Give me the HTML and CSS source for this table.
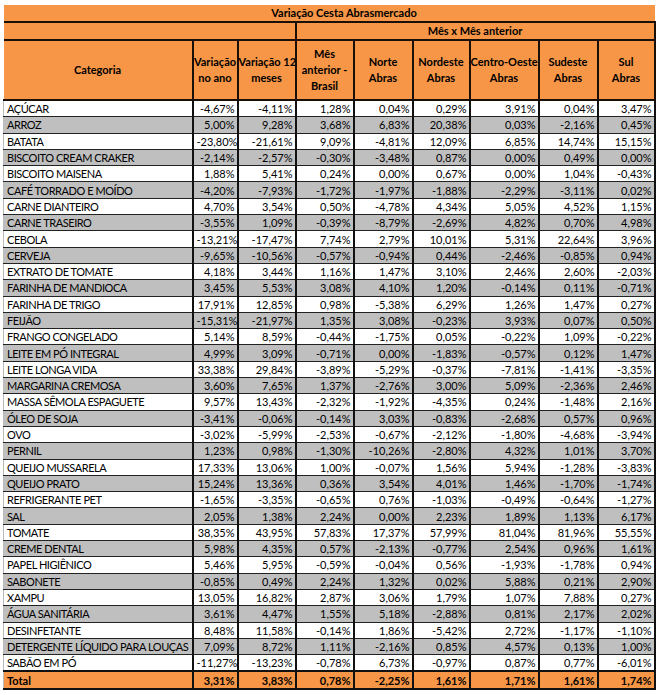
FILE: index.html
```html
<!DOCTYPE html>
<html lang="pt-BR">
<head>
<meta charset="utf-8">
<title>Variação Cesta Abrasmercado</title>
<link rel="stylesheet" href="styles.css">
</head>
<body>
<div class="wrap">
<table class="grid">
<colgroup>
<col class="c-cat"><col class="c-ano"><col class="c-12"><col class="c-br"><col class="c-no"><col class="c-ne"><col class="c-co"><col class="c-se"><col class="c-sul">
</colgroup>
<thead>
<tr class="h-title"><th colspan="9">Variação Cesta Abrasmercado</th></tr>
<tr class="h-group"><th colspan="3" class="blank"></th><th colspan="6" class="grp">Mês x Mês anterior</th></tr>
<tr class="h-cols">
<th>Categoria</th><th>Variação<br>no ano</th><th>Variação 12<br>meses</th><th>Mês<br>anterior -<br>Brasil</th><th>Norte<br>Abras</th><th>Nordeste<br>Abras</th><th>Centro-Oeste<br>Abras</th><th>Sudeste<br>Abras</th><th>Sul<br>Abras</th>
</tr>
</thead>
<tbody>
<tr><td>AÇÚCAR</td><td>-4,67%</td><td>-4,11%</td><td>1,28%</td><td>0,04%</td><td>0,29%</td><td>3,91%</td><td>0,04%</td><td>3,47%</td></tr>
<tr><td>ARROZ</td><td>5,00%</td><td>9,28%</td><td>3,68%</td><td>6,83%</td><td>20,38%</td><td>0,03%</td><td>-2,16%</td><td>0,45%</td></tr>
<tr><td>BATATA</td><td>-23,80%</td><td>-21,61%</td><td>9,09%</td><td>-4,81%</td><td>12,09%</td><td>6,85%</td><td>14,74%</td><td>15,15%</td></tr>
<tr><td>BISCOITO CREAM CRAKER</td><td>-2,14%</td><td>-2,57%</td><td>-0,30%</td><td>-3,48%</td><td>0,87%</td><td>0,00%</td><td>0,49%</td><td>0,00%</td></tr>
<tr><td>BISCOITO MAISENA</td><td>1,88%</td><td>5,41%</td><td>0,24%</td><td>0,00%</td><td>0,67%</td><td>0,00%</td><td>1,04%</td><td>-0,43%</td></tr>
<tr><td>CAFÉ TORRADO E MOÍDO</td><td>-4,20%</td><td>-7,93%</td><td>-1,72%</td><td>-1,97%</td><td>-1,88%</td><td>-2,29%</td><td>-3,11%</td><td>0,02%</td></tr>
<tr><td>CARNE DIANTEIRO</td><td>4,70%</td><td>3,54%</td><td>0,50%</td><td>-4,78%</td><td>4,34%</td><td>5,05%</td><td>4,52%</td><td>1,15%</td></tr>
<tr><td>CARNE TRASEIRO</td><td>-3,55%</td><td>1,09%</td><td>-0,39%</td><td>-8,79%</td><td>-2,69%</td><td>4,82%</td><td>0,70%</td><td>4,98%</td></tr>
<tr><td>CEBOLA</td><td>-13,21%</td><td>-17,47%</td><td>7,74%</td><td>2,79%</td><td>10,01%</td><td>5,31%</td><td>22,64%</td><td>3,96%</td></tr>
<tr><td>CERVEJA</td><td>-9,65%</td><td>-10,56%</td><td>-0,57%</td><td>-0,94%</td><td>0,44%</td><td>-2,46%</td><td>-0,85%</td><td>0,94%</td></tr>
<tr><td>EXTRATO DE TOMATE</td><td>4,18%</td><td>3,44%</td><td>1,16%</td><td>1,47%</td><td>3,10%</td><td>2,46%</td><td>2,60%</td><td>-2,03%</td></tr>
<tr><td>FARINHA DE MANDIOCA</td><td>3,45%</td><td>5,53%</td><td>3,08%</td><td>4,10%</td><td>1,20%</td><td>-0,14%</td><td>0,11%</td><td>-0,71%</td></tr>
<tr><td>FARINHA DE TRIGO</td><td>17,91%</td><td>12,85%</td><td>0,98%</td><td>-5,38%</td><td>6,29%</td><td>1,26%</td><td>1,47%</td><td>0,27%</td></tr>
<tr><td>FEIJÃO</td><td>-15,31%</td><td>-21,97%</td><td>1,35%</td><td>3,08%</td><td>-0,23%</td><td>3,93%</td><td>0,07%</td><td>0,50%</td></tr>
<tr><td>FRANGO CONGELADO</td><td>5,14%</td><td>8,59%</td><td>-0,44%</td><td>-1,75%</td><td>0,05%</td><td>-0,22%</td><td>1,09%</td><td>-0,22%</td></tr>
<tr><td>LEITE EM PÓ INTEGRAL</td><td>4,99%</td><td>3,09%</td><td>-0,71%</td><td>0,00%</td><td>-1,83%</td><td>-0,57%</td><td>0,12%</td><td>1,47%</td></tr>
<tr><td>LEITE LONGA VIDA</td><td>33,38%</td><td>29,84%</td><td>-3,89%</td><td>-5,29%</td><td>-0,37%</td><td>-7,81%</td><td>-1,41%</td><td>-3,35%</td></tr>
<tr><td>MARGARINA CREMOSA</td><td>3,60%</td><td>7,65%</td><td>1,37%</td><td>-2,76%</td><td>3,00%</td><td>5,09%</td><td>-2,36%</td><td>2,46%</td></tr>
<tr><td>MASSA SÊMOLA ESPAGUETE</td><td>9,57%</td><td>13,43%</td><td>-2,32%</td><td>-1,92%</td><td>-4,35%</td><td>0,24%</td><td>-1,48%</td><td>2,16%</td></tr>
<tr><td>ÓLEO DE SOJA</td><td>-3,41%</td><td>-0,06%</td><td>-0,14%</td><td>3,03%</td><td>-0,83%</td><td>-2,68%</td><td>0,57%</td><td>0,96%</td></tr>
<tr><td>OVO</td><td>-3,02%</td><td>-5,99%</td><td>-2,53%</td><td>-0,67%</td><td>-2,12%</td><td>-1,80%</td><td>-4,68%</td><td>-3,94%</td></tr>
<tr><td>PERNIL</td><td>1,23%</td><td>0,98%</td><td>-1,30%</td><td>-10,26%</td><td>-2,80%</td><td>4,32%</td><td>1,01%</td><td>3,70%</td></tr>
<tr><td>QUEIJO MUSSARELA</td><td>17,33%</td><td>13,06%</td><td>1,00%</td><td>-0,07%</td><td>1,56%</td><td>5,94%</td><td>-1,28%</td><td>-3,83%</td></tr>
<tr><td>QUEIJO PRATO</td><td>15,24%</td><td>13,36%</td><td>0,36%</td><td>3,54%</td><td>4,01%</td><td>1,46%</td><td>-1,70%</td><td>-1,74%</td></tr>
<tr><td>REFRIGERANTE PET</td><td>-1,65%</td><td>-3,35%</td><td>-0,65%</td><td>0,76%</td><td>-1,03%</td><td>-0,49%</td><td>-0,64%</td><td>-1,27%</td></tr>
<tr><td>SAL</td><td>2,05%</td><td>1,38%</td><td>2,24%</td><td>0,00%</td><td>2,23%</td><td>1,89%</td><td>1,13%</td><td>6,17%</td></tr>
<tr><td>TOMATE</td><td>38,35%</td><td>43,95%</td><td>57,83%</td><td>17,37%</td><td>57,99%</td><td>81,04%</td><td>81,96%</td><td>55,55%</td></tr>
<tr><td>CREME DENTAL</td><td>5,98%</td><td>4,35%</td><td>0,57%</td><td>-2,13%</td><td>-0,77%</td><td>2,54%</td><td>0,96%</td><td>1,61%</td></tr>
<tr><td>PAPEL HIGIÊNICO</td><td>5,46%</td><td>5,95%</td><td>-0,59%</td><td>-0,04%</td><td>0,56%</td><td>-1,93%</td><td>-1,78%</td><td>0,94%</td></tr>
<tr><td>SABONETE</td><td>-0,85%</td><td>0,49%</td><td>2,24%</td><td>1,32%</td><td>0,02%</td><td>5,88%</td><td>0,21%</td><td>2,90%</td></tr>
<tr><td>XAMPU</td><td>13,05%</td><td>16,82%</td><td>2,87%</td><td>3,06%</td><td>1,79%</td><td>1,07%</td><td>7,88%</td><td>0,27%</td></tr>
<tr><td>ÁGUA SANITÁRIA</td><td>3,61%</td><td>4,47%</td><td>1,55%</td><td>5,18%</td><td>-2,88%</td><td>0,81%</td><td>2,17%</td><td>2,02%</td></tr>
<tr><td>DESINFETANTE</td><td>8,48%</td><td>11,58%</td><td>-0,14%</td><td>1,86%</td><td>-5,42%</td><td>2,72%</td><td>-1,17%</td><td>-1,10%</td></tr>
<tr><td>DETERGENTE LÍQUIDO PARA LOUÇAS</td><td>7,09%</td><td>8,72%</td><td>1,11%</td><td>-2,16%</td><td>0,85%</td><td>4,57%</td><td>0,13%</td><td>1,00%</td></tr>
<tr><td>SABÃO EM PÓ</td><td>-11,27%</td><td>-13,23%</td><td>-0,78%</td><td>6,73%</td><td>-0,97%</td><td>0,87%</td><td>0,77%</td><td>-6,01%</td></tr>
</tbody>
<tfoot>
<tr class="total"><td>Total</td><td>3,31%</td><td>3,83%</td><td>0,78%</td><td>-2,25%</td><td>1,61%</td><td>1,71%</td><td>1,61%</td><td>1,74%</td></tr>
</tfoot>
</table>
</div>
</body>
</html>
```

FILE: styles.css
```css
html, body {
  margin: 0;
  padding: 0;
  background: #ffffff;
}

.wrap {
  padding: 5px 0 0 3px;
}

.grid {
  border-collapse: collapse;
  table-layout: fixed;
  width: 652px;
  font-family: Lato, "Open Sans", "Liberation Sans", sans-serif;
  font-size: 11px;
  color: #000;
}

.c-cat { width: 189px; }
.c-ano { width: 45px; }
.c-12 { width: 58px; }
.c-br { width: 58px; }
.c-no { width: 59px; }
.c-ne { width: 57px; }
.c-co { width: 69px; }
.c-se { width: 59px; }
.c-sul { width: 57px; }

.grid th {
  background: #f79646;
  font-weight: bold;
  font-size: 11px;
  padding: 0;
  text-align: center;
  line-height: 16px;
  white-space: nowrap;
}

.h-title th {
  height: 14px;
  padding-left: 30px;
  border-bottom: 2px solid #1a1008;
}

.h-group th {
  height: 15px;
  border-bottom: 2px solid #1a1008;
}

.h-group .grp {
  border-left: 2px solid #1a1008;
  border-right: 2px solid #1a1008;
}

.h-cols th {
  height: 58px;
  border: 2px solid #1a1008;
  border-top: none;
  padding: 0;
}

.h-cols th:first-child {
  border-left: none;
}

.grid td {
  height: 15.3px;
  padding: 0 2px 0 3px;
  text-align: right;
  border-left: 2px solid #111;
  border-right: 2px solid #111;
  border-bottom: 1px solid #222;
  line-height: 15px;
  white-space: nowrap;
  overflow: hidden;
}

.grid td:first-child {
  text-align: left;
  letter-spacing: -0.45px;
  border-left: 1px solid #bbb;
}

.grid tbody tr:nth-child(even) td {
  background: #bfbfbf;
}

.total td {
  background: #f79646;
  font-weight: bold;
  border-top: 2px solid #111;
  border-bottom: 2px solid #111;
}

.total td:first-child {
  letter-spacing: 0;
}
```
